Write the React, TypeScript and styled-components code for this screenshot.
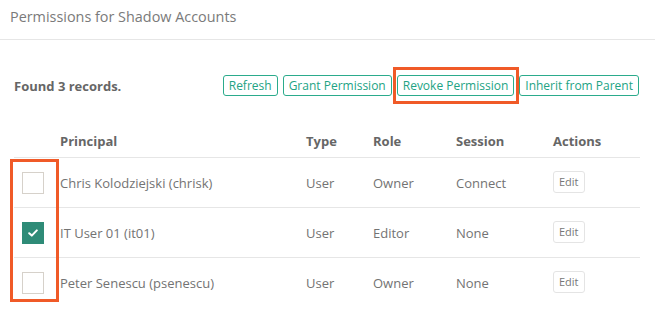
import React from "react";
import styled, { createGlobalStyle } from "styled-components";

const GlobalStyle = createGlobalStyle`
  html, body {
    margin: 0;
    padding: 0;
    background: #fff;
  }
  body {
    font-family: "Open Sans", "Liberation Sans", sans-serif;
    color: #666;
  }
`;

type Permission = {
  principal: string;
  type: string;
  role: string;
  session: string;
  checked: boolean;
};

const records: Permission[] = [
  { principal: "Chris Kolodziejski (chrisk)", type: "User", role: "Owner", session: "Connect", checked: false },
  { principal: "IT User 01 (it01)", type: "User", role: "Editor", session: "None", checked: true },
  { principal: "Peter Senescu (psenescu)", type: "User", role: "Owner", session: "None", checked: false },
];

const Page = styled.div`
  width: 655px;
  height: 315px;
  overflow: hidden;
`;

const TitleBar = styled.div`
  box-sizing: border-box;
  height: 40px;
  padding: 7px 10px 0;
  border-bottom: 1px solid #e6e6e6;
  font-size: 14.4px;
  color: #7a7a7a;
`;

const Toolbar = styled.div`
  display: flex;
  align-items: center;
  justify-content: space-between;
  height: 21px;
  margin-top: 35px;
  padding: 0 16px 0 14px;
`;

const Count = styled.div`
  font-size: 13px;
  font-weight: 700;
  color: #666;
`;

const Actions = styled.div`
  display: flex;
  gap: 5px;
`;

const OutlineButton = styled.button`
  box-sizing: border-box;
  height: 21px;
  padding: 0 5px;
  border: 1px solid #2bab8c;
  border-radius: 3px;
  background: #fff;
  color: #22a384;
  font-family: inherit;
  font-size: 12px;
  line-height: 19px;
  cursor: pointer;
`;

const Marked = styled.span`
  position: relative;
  display: inline-flex;
`;

const Callout = styled.span<{ $top: number; $right: number; $bottom: number; $left: number }>`
  position: absolute;
  top: ${(p) => p.$top}px;
  right: ${(p) => p.$right}px;
  bottom: ${(p) => p.$bottom}px;
  left: ${(p) => p.$left}px;
  border: 3px solid #f05a28;
  pointer-events: none;
`;

const Table = styled.div`
  margin: 29px 15px 0 14px;
`;

const Row = styled.div<{ $head?: boolean }>`
  display: grid;
  grid-template-columns: 46px 246px 67px 83px 97px 1fr;
  align-items: center;
  box-sizing: border-box;
  height: ${(p) => (p.$head ? "32px" : "50px")};
  border-top: ${(p) => (p.$head ? "none" : "1px solid #e6e6e6")};
  font-size: 13px;
  font-weight: ${(p) => (p.$head ? 700 : 400)};
  color: ${(p) => (p.$head ? "#666" : "#737373")};
`;

const Body = styled.div`
  position: relative;
`;

const Cell = styled.div`
  white-space: nowrap;
`;

const CheckCell = styled.div`
  padding-left: 8px;
  display: flex;
`;

const Box = styled.span<{ $checked: boolean }>`
  box-sizing: border-box;
  width: 22px;
  height: 22px;
  display: flex;
  align-items: center;
  justify-content: center;
  border: 1px solid ${(p) => (p.$checked ? "#2e8b77" : "#d6d1ca")};
  background: ${(p) => (p.$checked ? "#2e8b77" : "#fff")};
`;

const EditButton = styled.button`
  box-sizing: border-box;
  height: 22px;
  margin-top: -3px;
  padding: 0 5px;
  border: 1px solid #e4e4e4;
  border-radius: 3px;
  background: #fff;
  color: #777;
  font-family: inherit;
  font-size: 11px;
  line-height: 18px;
`;

function Check() {
  return (
    <svg width="10" height="8" viewBox="0 0 10 8">
      <path d="M1.2 4.2 L3.8 6.6 L8.8 1.4" fill="none" stroke="#fff" strokeWidth="2" strokeLinecap="round" strokeLinejoin="round" />
    </svg>
  );
}

export default function App() {
  return (
    <Page>
      <GlobalStyle />
      <TitleBar>Permissions for Shadow Accounts</TitleBar>
      <Toolbar>
        <Count>Found 3 records.</Count>
        <Actions>
          <OutlineButton>Refresh</OutlineButton>
          <OutlineButton>Grant Permission</OutlineButton>
          <Marked>
            <OutlineButton>Revoke Permission</OutlineButton>
            <Callout $top={-8} $right={-5} $bottom={-8} $left={-4} />
          </Marked>
          <OutlineButton>Inherit from Parent</OutlineButton>
        </Actions>
      </Toolbar>
      <Table>
        <Row $head>
          <Cell />
          <Cell>Principal</Cell>
          <Cell>Type</Cell>
          <Cell>Role</Cell>
          <Cell>Session</Cell>
          <Cell>Actions</Cell>
        </Row>
        <Body>
          {records.map((r) => (
            <Row key={r.principal}>
              <CheckCell>
                <Box $checked={r.checked}>{r.checked && <Check />}</Box>
              </CheckCell>
              <Cell>{r.principal}</Cell>
              <Cell>{r.type}</Cell>
              <Cell>{r.role}</Cell>
              <Cell>{r.session}</Cell>
              <Cell>
                <EditButton>Edit</EditButton>
              </Cell>
            </Row>
          ))}
          <Callout $top={2} $right={581} $bottom={5} $left={-4} />
        </Body>
      </Table>
    </Page>
  );
}
